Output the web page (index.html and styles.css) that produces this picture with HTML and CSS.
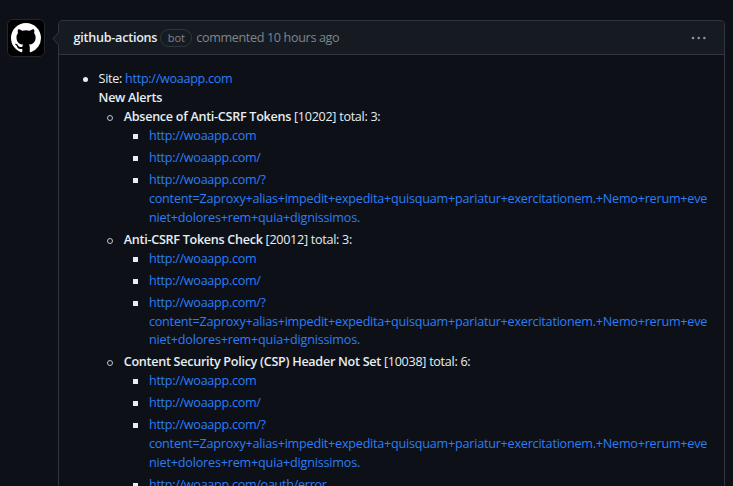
FILE: index.html
```html
<!DOCTYPE html>
<html lang="en">
<head>
<meta charset="utf-8">
<title>Comment</title>
<link rel="stylesheet" href="styles.css">
</head>
<body>
<div class="timeline-item">
  <a class="avatar">
    <svg viewBox="0 0 16 16" width="30" height="30" fill="#fff"><path d="M8 0C3.58 0 0 3.58 0 8c0 3.54 2.29 6.53 5.47 7.59.4.07.55-.17.55-.38 0-.19-.01-.82-.01-1.49-2.01.37-2.53-.49-2.69-.94-.09-.23-.48-.94-.82-1.13-.28-.15-.68-.52-.01-.53.63-.01 1.08.58 1.23.82.72 1.21 1.87.87 2.33.66.07-.52.28-.87.51-1.07-1.78-.2-3.64-.89-3.64-3.95 0-.87.31-1.59.82-2.15-.08-.2-.36-1.02.08-2.12 0 0 .67-.21 2.2.82.64-.18 1.32-.27 2-.27s1.36.09 2 .27c1.53-1.04 2.2-.82 2.2-.82.44 1.1.16 1.92.08 2.12.51.56.82 1.27.82 2.15 0 3.07-1.87 3.75-3.65 3.95.29.25.54.73.54 1.48 0 1.07-.01 1.93-.01 2.2 0 .21.15.46.55.38A8.01 8.01 0 0 0 16 8c0-4.42-3.58-8-8-8Z"/></svg>
  </a>
  <article class="comment">
    <svg class="caret" width="8" height="16" viewBox="0 0 8 16"><path d="M8 1 1.9 7.8 8 14.6Z" fill="#161b22"/><path d="M7.5 1.5 1.9 7.8l5.6 6.3" fill="none" stroke="#30363d"/></svg>
    <header class="comment-header">
      <strong class="author">github-actions</strong>
      <span class="label">bot</span>
      <span class="when">commented 10 hours ago</span>
      <svg class="kebab" width="16" height="4" viewBox="0 0 16 4" fill="#8b949e"><circle cx="2" cy="2" r="1.3"/><circle cx="7.7" cy="2" r="1.3"/><circle cx="13.4" cy="2" r="1.3"/></svg>
    </header>
    <div class="comment-body">
      <ul class="sites">
        <li>Site: <a>http://woaapp.com</a><br><strong>New Alerts</strong>
          <ul class="alerts">
            <li><strong>Absence of Anti-CSRF Tokens</strong> [10202] total: 3:
              <ul class="urls">
                <li><a>http://woaapp.com</a></li>
                <li><a>http://woaapp.com/</a></li>
                <li><a>http://woaapp.com/?<br><span class="query">content=Zaproxy+alias+impedit+expedita+quisquam+pariatur+exercitationem.+Nemo+rerum+eve</span><br><span class="query-end">niet+dolores+rem+quia+dignissimos.</span></a></li>
              </ul>
            </li>
            <li><strong>Anti-CSRF Tokens Check</strong> [20012] total: 3:
              <ul class="urls">
                <li><a>http://woaapp.com</a></li>
                <li><a>http://woaapp.com/</a></li>
                <li><a>http://woaapp.com/?<br><span class="query">content=Zaproxy+alias+impedit+expedita+quisquam+pariatur+exercitationem.+Nemo+rerum+eve</span><br><span class="query-end">niet+dolores+rem+quia+dignissimos.</span></a></li>
              </ul>
            </li>
            <li><strong>Content Security Policy (CSP) Header Not Set</strong> [10038] total: 6:
              <ul class="urls">
                <li><a>http://woaapp.com</a></li>
                <li><a>http://woaapp.com/</a></li>
                <li><a>http://woaapp.com/?<br><span class="query">content=Zaproxy+alias+impedit+expedita+quisquam+pariatur+exercitationem.+Nemo+rerum+eve</span><br><span class="query-end">niet+dolores+rem+quia+dignissimos.</span></a></li>
                <li><a>http://woaapp.com/oauth/error</a></li>
              </ul>
            </li>
          </ul>
        </li>
      </ul>
    </div>
  </article>
</div>
</body>
</html>
```
FILE: styles.css
```css
*, ::before { box-sizing: border-box; }
html, body { height: 100%; }
body {
  margin: 0;
  overflow: hidden;
  background: #0d1117;
  color: #e6edf3;
  font: 12.6px/18.9px "Open Sans", "Noto Sans", sans-serif;
  letter-spacing: -0.29px;
}
.timeline-item {
  display: flex;
  align-items: flex-start;
  height: 100%;
  padding: 20px 8px 0 7px;
}
.avatar {
  display: flex;
  align-items: center;
  justify-content: center;
  flex: none;
  width: 38px;
  height: 38px;
  margin: -1px 13px 0 0;
  background: #000;
  border: 1px solid #22272e;
  border-radius: 6px;
}
.comment {
  position: relative;
  flex: 1;
  min-width: 0;
  height: 100%;
  border: 1px solid #30363d;
  border-bottom: 0;
  border-radius: 5px 5px 0 0;
}
.caret { position: absolute; left: -8px; top: 10px; }
.comment-header {
  display: flex;
  align-items: center;
  height: 34px;
  padding: 1px 17px 0 14.4px;
  background: #161b22;
  border-bottom: 1px solid #30363d;
  border-radius: 4px 4px 0 0;
  color: #7d8590;
}
.author { color: #e6edf3; letter-spacing: -0.24px; }
strong { font-weight: 600; }
.label {
  height: 18px;
  margin: 0 4px 0 3px;
  padding: 0 6.5px;
  border: 1px solid #30363d;
  border-radius: 9px;
  font-size: 11px;
  line-height: 16px;
  letter-spacing: -0.1px;
}
.when { letter-spacing: -0.35px; }
.kebab { margin-left: auto; }
.comment-body { padding: 15.4px 14.4px 0; white-space: nowrap; }
ul { margin: 0; padding-left: 25.2px; list-style: none; }
li { position: relative; }
li + li { margin-top: 3.05px; }
li::before { content: ""; position: absolute; top: 7px; }
.sites > li::before {
  left: -15.6px;
  width: 5px;
  height: 5px;
  border-radius: 50%;
  background: #e6edf3;
}
.alerts > li::before {
  left: -16.8px;
  width: 6px;
  height: 6px;
  border: 1px solid #c0c6cc;
  border-radius: 50%;
}
.urls > li::before {
  left: -16px;
  width: 5px;
  height: 5px;
  background: #e6edf3;
}
a { color: #2b7df8; }
.query { letter-spacing: -0.222px; }
.query-end { letter-spacing: -0.18px; }
```
